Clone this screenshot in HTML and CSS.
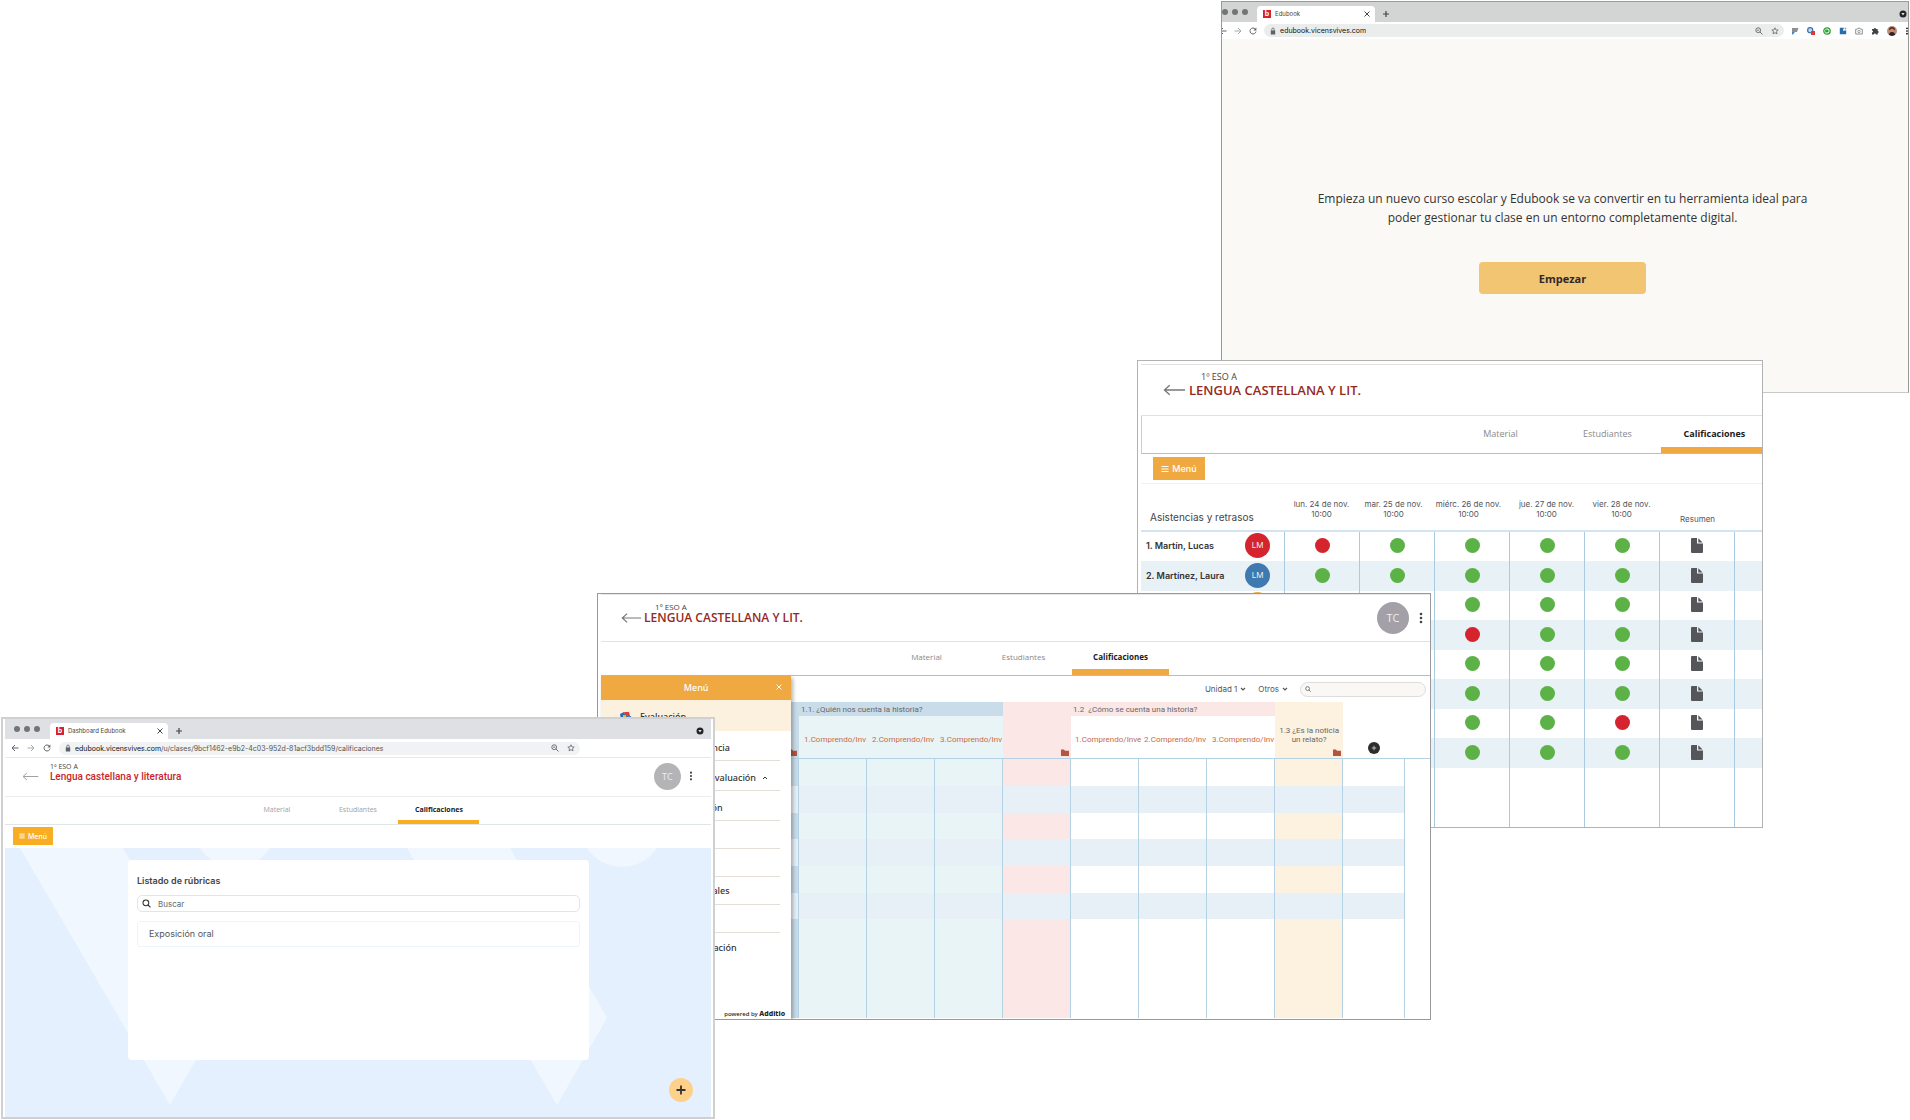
FILE: index.html
```html
<!DOCTYPE html>
<html lang="es">
<head>
<meta charset="utf-8">
<title>Edubook</title>
<link rel="stylesheet" href="styles.css">
</head>
<body>
<svg class="sprite" aria-hidden="true">
  <symbol id="i-back" viewBox="0 0 24 12"><path d="M7 1 1.500 6 7 11M1.500 6H23" fill="none" stroke="currentColor" stroke-width="1.400"/></symbol>
  <symbol id="i-left" viewBox="0 0 8 8"><path d="M4 1 1 4l3 3M1 4h6.500" fill="none" stroke="currentColor"/></symbol>
  <symbol id="i-right" viewBox="0 0 8 8"><path d="m4 1 3 3-3 3M7 4H.5" fill="none" stroke="currentColor"/></symbol>
  <symbol id="i-reload" viewBox="0 0 8 8"><path d="M6.300 2A3 3 0 1 0 7 4.600" fill="none" stroke="currentColor"/><path d="M7.400.5v3h-3z" fill="currentColor"/></symbol>
  <symbol id="i-lock" viewBox="0 0 8 8"><path d="M1.800 3.500h4.400v4H1.800z" fill="currentColor"/><path d="M2.800 4V2.200a1.200 1.200 0 0 1 2.400 0V4" fill="none" stroke="currentColor" stroke-width=".8"/></symbol>
  <symbol id="i-zoom" viewBox="0 0 8 8"><circle cx="3.200" cy="3.200" r="2.400" fill="none" stroke="currentColor" stroke-width=".9"/><path d="m5 5 2.500 2.500M2.200 3.200h2" stroke="currentColor" stroke-width=".9"/></symbol>
  <symbol id="i-search" viewBox="0 0 10 10"><circle cx="4.300" cy="4.300" r="3.200" fill="none" stroke="currentColor" stroke-width="1.200"/><path d="m6.600 6.600 2.800 2.800" stroke="currentColor" stroke-width="1.300"/></symbol>
  <symbol id="i-star" viewBox="0 0 8 8"><path d="m4 .8.95 2.100 2.250.2-1.700 1.500.5 2.200L4 5.700 2 6.800l.5-2.200L.8 3.100l2.250-.2z" fill="none" stroke="currentColor" stroke-width=".8"/></symbol>
  <symbol id="i-close" viewBox="0 0 8 8"><path d="m1.500 1.500 5 5m0-5-5 5" stroke="currentColor" stroke-width="1"/></symbol>
  <symbol id="i-plus" viewBox="0 0 8 8"><path d="M4 1v6M1 4h6" stroke="currentColor" stroke-width="1.200"/></symbol>
  <symbol id="i-bars" viewBox="0 0 8 8"><path d="M.5 1.500h7M.5 4h7M.5 6.500h7" stroke="currentColor" stroke-width="1.200"/></symbol>
  <symbol id="i-dots" viewBox="0 0 4 12"><circle cx="2" cy="2" r="1.300"/><circle cx="2" cy="6" r="1.300"/><circle cx="2" cy="10" r="1.300"/></symbol>
  <symbol id="i-chevron" viewBox="0 0 6 6"><path d="m1 2 2 2 2-2" fill="none" stroke="currentColor" stroke-width="1.200"/></symbol>
  <symbol id="i-up" viewBox="0 0 6 6"><path d="m1 4 2-2 2 2" fill="none" stroke="currentColor" stroke-width="1"/></symbol>
  <symbol id="i-more" viewBox="0 0 8 8"><circle cx="4" cy="4" r="3.500" fill="#222427"/><path d="M2.400 3h3.200L4 5.400z" fill="#e5e6e8"/></symbol>
  <symbol id="i-doc" viewBox="0 0 12 15"><path d="M1 0h5v5.500h6V14a1 1 0 0 1-1 1H1a1 1 0 0 1-1-1V1a1 1 0 0 1 1-1z" fill="#55565a"/><path d="M7.300.3 11.600 4.500H7.300z" fill="#55565a"/></symbol>
  <symbol id="i-folder" viewBox="0 0 8 7"><path d="M0 .5h3l1 1.200h4V7H0z" fill="#b5543f"/></symbol>
</svg>

<main class="stage">

  <section class="window welcome" aria-label="Edubook">
    <div class="tabbar">
      <div class="lights"><i></i><i></i><i></i></div>
      <div class="tab"><b class="favicon">b</b><span>Edubook</span><svg><use href="#i-close"/></svg></div>
      <svg class="newtab"><use href="#i-plus"/></svg>
      <svg class="more"><use href="#i-more"/></svg>
    </div>
    <div class="urlbar">
      <svg><use href="#i-left"/></svg><svg class="dim"><use href="#i-right"/></svg><svg><use href="#i-reload"/></svg>
      <div class="address"><svg><use href="#i-lock"/></svg><span class="url">edubook.vicensvives.com</span><svg><use href="#i-zoom"/></svg><svg><use href="#i-star"/></svg></div>
      <div class="extensions">
        <svg viewBox="0 0 8 8"><path d="M1 1h6.500L6 5H1z" fill="#8b9094"/><path d="M1 5h3L2 7.500H1z" fill="#4a86ba"/></svg>
        <svg viewBox="0 0 10 10"><circle cx="4" cy="4" r="3.200" fill="#c7d9ef" stroke="#3d6fae" stroke-width="1.500"/><path d="M5 5h5v5H5z" fill="#dd3b30"/></svg>
        <svg viewBox="0 0 8 8"><circle cx="4" cy="4" r="3.200" fill="#fff" stroke="#2ba12f" stroke-width="1.300"/><path d="M2.200 2.500h2.300L6 4 4.500 5.500H2.200z" fill="#2ba12f"/></svg>
        <svg viewBox="0 0 8 8"><path d="M.8.800h4L4 4l3.200-.8v4H.8z" fill="#2c6ca8"/><path d="M5 .8h2.200V3z" fill="#63a2d5"/></svg>
        <svg viewBox="0 0 8 8"><path d="M.7 2.200h1.600L3 1.200h2l.7 1h1.600V7H.7z" fill="none" stroke="#70757a" stroke-width=".8"/><circle cx="4" cy="4.500" r="1.200" fill="none" stroke="#70757a" stroke-width=".7"/></svg>
        <svg viewBox="0 0 8 8"><path d="M1 2h1.800a1.100 1.100 0 1 1 2.200 0h1.700v2a1 1 0 1 1 0 2v1.500H5a1.100 1.100 0 0 0-2.200 0H1V5.600a1 1 0 0 0 0-2z" fill="#3f4347"/></svg>
        <svg class="face" viewBox="0 0 10 10"><circle cx="5" cy="5" r="5" fill="#b98f7c"/><path d="M2 4a3 3 0 0 1 6 0z" fill="#4a2b22"/><circle cx="5" cy="4.500" r="1.900" fill="#d98867"/><path d="M2 9a3 3 0 0 1 6 0L5 10z" fill="#33222a"/></svg>
        <svg class="kebab"><use href="#i-dots"/></svg>
      </div>
    </div>
    <div class="intro">
      <p>Empieza un nuevo curso escolar y Edubook se va convertir en tu herramienta ideal para poder gestionar tu clase en un entorno completamente digital.</p>
      <button type="button">Empezar</button>
    </div>
  </section>

  <section class="window attendance" aria-label="Asistencias y retrasos">
    <header class="course">
      <a class="back" href="#" aria-label="Volver"><svg><use href="#i-back"/></svg></a>
      <div class="names"><small>1º ESO A</small><h2>LENGUA CASTELLANA Y LIT.</h2></div>
    </header>
    <nav class="tabs"><a href="#">Material</a><a href="#">Estudiantes</a><a href="#" class="active">Calificaciones</a></nav>
    <div class="tools"><button type="button" class="menu"><svg><use href="#i-bars"/></svg>Menú</button></div>
    <table class="register">
      <colgroup><col class="who"><col class="day"><col class="day"><col class="day"><col class="day"><col class="day"><col class="day"><col></colgroup>
      <thead><tr>
        <th class="title">Asistencias y retrasos</th>
        <th>lun. 24 de nov.<br>10:00</th><th class="early">mar. 25 de nov.<br>10:00</th><th class="early">miérc. 26 de nov.<br>10:00</th><th>jue. 27 de nov.<br>10:00</th><th>vier. 28 de nov.<br>10:00</th>
        <th class="summary">Resumen</th><th></th>
      </tr></thead>
      <tbody>
        <tr><td><div class="pupil"><span>1. Martín, Lucas</span><b class="red">LM</b></div></td><td><i class="no"></i></td><td><i></i></td><td><i></i></td><td><i></i></td><td><i></i></td><td><svg><use href="#i-doc"/></svg></td><td></td></tr>
        <tr><td><div class="pupil"><span>2. Martínez, Laura</span><b class="blue">LM</b></div></td><td><i></i></td><td><i></i></td><td><i></i></td><td><i></i></td><td><i></i></td><td><svg><use href="#i-doc"/></svg></td><td></td></tr>
        <tr><td><div class="pupil"><span></span><b class="amber"></b></div></td><td><i></i></td><td><i></i></td><td><i></i></td><td><i></i></td><td><i></i></td><td><svg><use href="#i-doc"/></svg></td><td></td></tr>
        <tr><td></td><td><i></i></td><td><i></i></td><td><i class="no"></i></td><td><i></i></td><td><i></i></td><td><svg><use href="#i-doc"/></svg></td><td></td></tr>
        <tr><td></td><td><i></i></td><td><i></i></td><td><i></i></td><td><i></i></td><td><i></i></td><td><svg><use href="#i-doc"/></svg></td><td></td></tr>
        <tr><td></td><td><i></i></td><td><i></i></td><td><i></i></td><td><i></i></td><td><i></i></td><td><svg><use href="#i-doc"/></svg></td><td></td></tr>
        <tr><td></td><td><i></i></td><td><i></i></td><td><i></i></td><td><i></i></td><td><i class="no"></i></td><td><svg><use href="#i-doc"/></svg></td><td></td></tr>
        <tr><td></td><td><i></i></td><td><i></i></td><td><i></i></td><td><i></i></td><td><i></i></td><td><svg><use href="#i-doc"/></svg></td><td></td></tr>
        <tr class="rest"><td></td><td></td><td></td><td></td><td></td><td></td><td></td><td></td></tr>
      </tbody>
    </table>
  </section>

  <section class="window gradebook" aria-label="Calificaciones">
    <header class="course">
      <a class="back" href="#" aria-label="Volver"><svg><use href="#i-back"/></svg></a>
      <div class="names"><small>1º ESO A</small><h2>LENGUA CASTELLANA Y LIT.</h2></div>
      <span class="avatar">TC</span>
      <button type="button" class="options" aria-label="Opciones"><svg><use href="#i-dots"/></svg></button>
    </header>
    <nav class="tabs"><a href="#">Material</a><a href="#">Estudiantes</a><a href="#" class="active">Calificaciones</a></nav>
    <div class="split">
      <aside class="sidebar">
        <div class="sidehead"><span>Menú</span><button type="button" aria-label="Cerrar"><svg><use href="#i-close"/></svg></button></div>
        <a href="#" class="current"><svg viewBox="0 0 12 12"><path d="M0 3 4 1l2 4-5 4z" fill="#2d6cb0"/><path d="M4 1h5l1 4-4 1z" fill="#d8412f"/><path d="M3 4h3v3H3z" fill="#e9b52c"/><path d="M6 5h5l1 4-5 2z" fill="#3b83c4"/><path d="M1 8h6v3H2z" fill="#45935a"/></svg>Evaluación</a>
        <ul>
          <li><a href="#">Control de asistencia</a></li>
          <li><a href="#">Instrumento de evaluación<svg><use href="#i-up"/></svg></a></li>
          <li><a href="#">Tabla de valoración</a></li>
          <li><a href="#">Rúbricas</a></li>
          <li><a href="#">Informes</a></li>
          <li><a href="#">Pruebas trimestrales</a></li>
          <li><a href="#">Ajustes</a></li>
          <li><a href="#">Informe de evaluación</a></li>
        </ul>
        <p class="powered">powered by <b>Additio</b></p>
      </aside>
      <div class="sheet">
        <div class="filters">
          <button type="button">Unidad 1<svg><use href="#i-chevron"/></svg></button>
          <button type="button">Otros<svg><use href="#i-chevron"/></svg></button>
          <label class="find"><svg><use href="#i-search"/></svg><input type="search" aria-label="Buscar"></label>
        </div>
        <table class="marks">
          <colgroup><col class="edge"><col class="unit"><col class="unit"><col class="unit"><col class="unit"><col class="unit"><col class="unit"><col class="unit"><col class="unit"><col class="add"><col></colgroup>
          <thead>
            <tr class="groups"><th rowspan="2" class="sky foldered"><svg><use href="#i-folder"/></svg></th><th colspan="3" class="sky">1.1. ¿Quién nos cuenta la historia?</th><th rowspan="2" class="pink foldered"><svg><use href="#i-folder"/></svg></th><th colspan="3" class="pink">1.2 &nbsp;¿Cómo se cuenta una historia?</th><th rowspan="2" class="cream foldered">1.3 ¿Es la noticia un relato?<svg><use href="#i-folder"/></svg></th><th rowspan="2" class="adder"><button type="button" aria-label="Añadir"><svg><use href="#i-plus"/></svg></button></th><th rowspan="2"></th></tr>
            <tr class="tasks"><th class="aqua">1.Comprendo/Inv</th><th class="aqua">2.Comprendo/Inv</th><th class="aqua">3.Comprendo/Inv</th><th>1.Comprendo/Inve</th><th>2.Comprendo/Inv</th><th>3.Comprendo/Inv</th></tr>
          </thead>
          <tbody>
            <tr><td class="sky"></td><td class="aqua"></td><td class="aqua"></td><td class="aqua"></td><td class="pink"></td><td></td><td></td><td></td><td class="cream"></td><td></td><td></td></tr>
            <tr class="band"><td></td><td></td><td></td><td></td><td></td><td></td><td></td><td></td><td></td><td></td><td></td></tr>
            <tr class="short"><td class="sky"></td><td class="aqua"></td><td class="aqua"></td><td class="aqua"></td><td class="pink"></td><td></td><td></td><td></td><td class="cream"></td><td></td><td></td></tr>
            <tr class="band"><td></td><td></td><td></td><td></td><td></td><td></td><td></td><td></td><td></td><td></td><td></td></tr>
            <tr><td class="sky"></td><td class="aqua"></td><td class="aqua"></td><td class="aqua"></td><td class="pink"></td><td></td><td></td><td></td><td class="cream"></td><td></td><td></td></tr>
            <tr class="band short"><td></td><td></td><td></td><td></td><td></td><td></td><td></td><td></td><td></td><td></td><td></td></tr>
            <tr class="rest"><td class="sky"></td><td class="aqua"></td><td class="aqua"></td><td class="aqua"></td><td class="pink"></td><td></td><td></td><td></td><td class="cream"></td><td></td><td></td></tr>
          </tbody>
        </table>
      </div>
    </div>
  </section>

  <section class="window dashboard" aria-label="Dashboard Edubook">
    <div class="tabbar">
      <div class="lights"><i></i><i></i><i></i></div>
      <div class="tab"><b class="favicon">b</b><span>Dashboard Edubook</span><svg><use href="#i-close"/></svg></div>
      <svg class="newtab"><use href="#i-plus"/></svg>
      <svg class="more"><use href="#i-more"/></svg>
    </div>
    <div class="urlbar">
      <svg><use href="#i-left"/></svg><svg class="dim"><use href="#i-right"/></svg><svg><use href="#i-reload"/></svg>
      <div class="address"><svg><use href="#i-lock"/></svg><span class="url">edubook.vicensvives.com<em>/u/clases/9bcf1462-e9b2-4c03-952d-81acf3bdd159/calificaciones</em></span><svg><use href="#i-zoom"/></svg><svg><use href="#i-star"/></svg></div>
    </div>
    <header class="course">
      <a class="back" href="#" aria-label="Volver"><svg><use href="#i-back"/></svg></a>
      <div class="names"><small>1º ESO A</small><h2>Lengua castellana y literatura</h2></div>
      <span class="avatar">TC</span>
      <button type="button" class="options" aria-label="Opciones"><svg><use href="#i-dots"/></svg></button>
    </header>
    <nav class="tabs"><a href="#">Material</a><a href="#">Estudiantes</a><a href="#" class="active">Calificaciones</a></nav>
    <div class="tools"><button type="button" class="menu"><svg><use href="#i-bars"/></svg>Menú</button></div>
    <div class="canvas">
      <svg class="decor" viewBox="0 0 707 269" aria-hidden="true"><g fill="#f0f7ff"><path d="M15 0h103l97 170-50 87z"/><path d="M402 0h103l97 170-50 87z"/><circle cx="230" cy="-23" r="42"/><circle cx="617" cy="-23" r="42"/></g></svg>
      <div class="card">
        <h3>Listado de rúbricas</h3>
        <label class="search"><svg><use href="#i-search"/></svg><input type="search" placeholder="Buscar" aria-label="Buscar"></label>
        <a href="#" class="rubric">Exposición oral</a>
      </div>
      <button type="button" class="fab" aria-label="Añadir"><svg><use href="#i-plus"/></svg></button>
    </div>
  </section>

</main>
</body>
</html>
```

FILE: styles.css
```css
* { box-sizing: border-box; }
body { margin: 0; background: #fff; color: #333; font-family: "Open Sans", "Noto Sans", sans-serif; }
a { color: inherit; text-decoration: none; }
button { margin: 0; padding: 0; border: 0; background: none; color: inherit; font: inherit; cursor: pointer; }
input { min-width: 0; padding: 0; border: 0; outline: 0; background: none; color: inherit; font: inherit; }
h2, h3, p, ul { margin: 0; padding: 0; }
ul { list-style: none; }
svg { display: block; flex: none; width: 8px; height: 8px; }
.sprite { position: absolute; width: 0; height: 0; }

/* Overlapping windows on a free canvas */
.stage { position: relative; min-height: 1120px; overflow: hidden; }
.window { position: absolute; isolation: isolate; overflow: hidden; background: #fff; border: 1px solid #999; }
.welcome { left: 63.93%; top: 1px; width: 36.02%; border-bottom-color: #c8c8c8; }
.attendance { left: 59.53%; top: 360px; width: 32.77%; padding: 3px 0 0 3px; border-color: #b0b2b3; }
.gradebook { left: 31.26%; top: 593px; width: 43.66%; padding-left: 3px; }
.dashboard { left: 0.05%; top: 717px; width: 37.38%; padding: 0 2px; border: 2px solid #d0d0d0; }

/* Browser chrome */
.tabbar { display: flex; align-items: flex-end; height: 20px; background: #dfe0e4; font: 6px/16px Inter, sans-serif; color: #444; }
.welcome .tabbar { background: #d2d5d4; }
.lights { display: flex; gap: 4px; width: 45px; height: 20px; padding-left: 9px; align-items: center; }
.welcome .lights { width: 35px; padding-left: 0; }
.lights i { width: 6px; height: 6px; border-radius: 50%; background: #737575; }
.tab { display: flex; align-items: center; gap: 4px; width: 118px; height: 16px; padding: 0 4px 0 6px; border-radius: 4px 4px 0 0; background: #fff; }
.tab span { flex: 1; }
.favicon { width: 8px; height: 8px; background: #d5222c; color: #fff; font: 700 7px/8px Inter, sans-serif; text-align: center; }
.newtab { margin: 0 0 4px 7px; }
.more { margin: 0 7px 4px auto; }
.welcome .more { margin-right: 1px; }
.urlbar { display: flex; align-items: center; gap: 8px; height: 19px; padding: 0 131px 0 6px; border-bottom: 1px solid #e8e8e8; color: #5f6368; font: 400 7px/13px Inter, sans-serif; }
.welcome .urlbar { height: 17px; padding: 0; border: 0; gap: 7px; }
.welcome .urlbar > svg:first-child { margin-left: -3px; }
.dim { color: #a5a8ab; }
.address { display: flex; flex: 1; align-items: center; gap: 8px; height: 13px; padding: 0 5px; border-radius: 7px; background: #f0f2f3; }
.welcome .address { background: #ebedec; }
.address .url { flex: 1; margin-left: -5px; color: #111; white-space: nowrap; }
.address em { font-style: normal; color: #555; }
.extensions { display: flex; align-items: center; gap: 8px; width: 117px; }
.extensions .face { width: 10px; height: 10px; }
.extensions .kebab { width: 4px; }

/* Welcome message */
.intro { padding: 150px 5px 98px 0; background: #faf9f5; text-align: center; }
.intro p { max-width: 500px; margin: 0 auto 35px; font-size: 12px; line-height: 19px; }
.intro button { width: 167px; height: 32px; border-radius: 4px; background: #f2c572; color: #33262b; font-size: 11px; font-weight: 700; }

/* Course heading */
.course { display: flex; align-items: center; border-bottom: 1px solid #e3e2de; }
.back { align-self: center; color: #77787a; }
.back svg { width: 23px; height: 12px; }
.names small { display: block; color: #444; }
.names h2 { color: #96291f; font-weight: 600; white-space: nowrap; }
.avatar { margin-left: auto; border-radius: 50%; background: #a3a0a7; color: #eee; text-align: center; }
.options svg { width: 4px; height: 12px; fill: #444; }

.attendance .course { height: 52px; padding-left: 22px; border-top: 1px solid #e3e2de; align-items: flex-start; }
.attendance .back { align-self: flex-start; margin-top: 19px; }
.attendance .names { padding: 6px 0 0 3px; }
.attendance small { padding-left: 12px; font-size: 9px; line-height: 12px; }
.attendance h2 { font-size: 13px; line-height: 14px; }

.gradebook .course { height: 48px; padding: 0 7px 0 20px; border-top: 1px solid #e8e8e8; }
.gradebook .back svg { width: 21px; }
.gradebook .names { padding: 0 0 10px 2px; }
.gradebook small { padding-left: 11px; font-size: 8px; line-height: 10px; }
.gradebook h2 { font-size: 12px; line-height: 12px; }
.gradebook .avatar { width: 32px; height: 32px; font-size: 11px; line-height: 32px; }
.gradebook .options { margin-left: 10px; }

.dashboard .course { height: 39px; padding: 0 18px 2px 17px; border-color: #ececec; }
.dashboard .back { color: #a0a0a2; }
.dashboard .back svg { width: 17px; height: 9px; }
.dashboard .names { padding: 0 0 8px 11px; }
.dashboard small { font-size: 7px; line-height: 9px; }
.dashboard h2 { color: #c9252b; font: 500 10px/11px Roboto, sans-serif; }
.dashboard .avatar { width: 27px; height: 27px; background: #b4b4b6; font-size: 9px; line-height: 27px; }
.dashboard .options { margin-left: 8px; }
.dashboard .options svg { height: 10px; }

/* Section tabs */
.tabs { display: flex; justify-content: center; border-bottom: 1px solid #bdbdb8; color: #88898b; text-align: center; }
.tabs a { border-bottom: 6px solid transparent; }
.tabs .active { border-color: #f0a840; color: #1b1b1b; font-weight: 700; }
.attendance .tabs { height: 38px; justify-content: flex-end; border-left: 1px solid #d0d0d0; font-size: 9px; line-height: 35px; }
.attendance .tabs a { width: 107px; height: 37px; }
.attendance .tabs a:last-child { margin-right: -6px; }
.gradebook .tabs { height: 34px; padding-left: 16px; font-size: 8px; line-height: 30px; }
.gradebook .tabs a { width: 97px; height: 33px; }
.dashboard .tabs { height: 28px; border-color: #dfe6e6; color: #a0a1a3; font-size: 7px; line-height: 25px; }
.dashboard .tabs a { width: 81px; height: 27px; border-bottom-width: 4px; }
.dashboard .tabs .active { border-color: #f9ad22; color: #1b1b1b; }

.tools { display: flex; }
.menu { display: flex; align-items: center; justify-content: center; gap: 3px; color: #fff; background: #f0a840; font-family: Inter, sans-serif; font-weight: 500; }
.attendance .tools { height: 30px; padding: 3px 0 0 12px; border-bottom: 1px solid #f1f0ec; }
.attendance .menu { width: 52px; height: 23px; font-size: 9px; }
.dashboard .tools { height: 23px; padding: 2px 0 0 8px; }
.dashboard .menu { width: 40px; height: 18px; background: #f9ad22; font-size: 7px; }
.dashboard .menu svg { width: 6px; height: 6px; }

/* Attendance register */
table { width: 100%; border-collapse: separate; border-spacing: 0; table-layout: fixed; font-family: Inter, sans-serif; }
th, td { padding: 0; font-weight: 400; }
.who { width: 144px; }
.day { width: 75px; }
.register th { height: 48px; padding: 0 2px 11px 0; border-bottom: 2px solid #d3e3ef; font-size: 8px; line-height: 10px; color: #55565a; vertical-align: bottom; white-space: nowrap; }
.register .title { padding: 0 0 6px 9px; font-size: 10px; line-height: 14px; color: #444; text-align: left; }
.register .early { padding-right: 8px; }
.register .summary { padding: 0 0 6px; }
.register td { height: 29px; padding-bottom: 2px; border-right: 1px solid #a9cae0; }
.register tr:nth-child(even) td { height: 30px; background: #e8f1f6; }
.register td:last-child { border: 0; }
.register td > i { display: block; width: 15px; height: 15px; margin: 0 auto; border-radius: 50%; background: #5cb247; }
.register td > .no { background: #d5242e; }
.register td > svg { width: 12px; height: 15px; margin: 0 auto; }
.register .rest td { height: 59px; }
.pupil { display: flex; align-items: center; justify-content: space-between; padding: 0 14px 0 5px; color: #333; font-size: 9px; font-weight: 600; }
.pupil b { width: 25px; height: 25px; border-radius: 50%; color: #eee; font-size: 8px; font-weight: 400; line-height: 25px; text-align: center; }
.red { background: #d5242e; }
.blue { background: #3e79b0; }
.amber { background: #f0a840; }

/* Gradebook */
.split { display: flex; }
.sidebar { position: relative; z-index: 1; flex: none; width: 190px; background: #fff; color: #333; font-family: "Noto Sans", sans-serif; font-size: 9px; font-weight: 500; box-shadow: 2px 2px 4px rgba(0, 0, 0, .3); }
.sidehead { display: flex; align-items: center; height: 24px; padding: 0 8px 2px 16px; background: #f0a840; color: #fff; text-align: center; }
.sidehead span { flex: 1; }
.current { display: flex; align-items: center; gap: 8px; height: 31px; padding: 2px 0 0 19px; background: #fcf1de; }
.current svg { width: 12px; height: 12px; }
.sidebar li { display: flex; align-items: center; height: 28px; margin-right: 11px; padding-left: 39px; border-bottom: 1px solid #e3dfd8; }
.sidebar li:nth-child(-n+3) { height: 30px; padding-top: 4px; }
.sidebar li:last-child { border: 0; }
.sidebar li a { display: flex; align-items: center; gap: 6px; }
.sidebar li svg { width: 6px; height: 6px; }
.powered { padding: 48px 6px 0 0; color: #222; font-size: 6px; font-weight: 500; line-height: 9px; text-align: right; }
.powered b { font-size: 7px; font-weight: 800; }
.sheet { flex: 1; min-width: 0; }
.filters { display: flex; align-items: center; justify-content: flex-end; gap: 12px; height: 26px; padding-right: 4px; color: #55565a; font: 8px/12px Inter, sans-serif; }
.filters button { display: flex; align-items: center; gap: 3px; }
.filters svg { width: 6px; height: 6px; }
.find { display: flex; align-items: center; width: 126px; height: 15px; padding: 0 4px; border: 1px solid #dedddb; border-radius: 8px; background: #faf8f5; }
.find input { flex: 1; }

.edge { width: 8px; }
.unit { width: 68px; }
.add { width: 62px; }
.marks th { color: #66676b; font: 8px/9px Roboto, sans-serif; border-bottom: 1px solid #b5d2e5; }
.marks .groups th[colspan] { height: 14px; padding-left: 2px; border: 0; text-align: left; }
.marks .tasks th { height: 43px; color: #c96a48; white-space: nowrap; padding: 4px 0 0 4px; }
.marks .foldered { position: relative; padding-top: 10px; }
.foldered svg { position: absolute; right: 2px; bottom: 2px; height: 7px; }
.marks .adder { padding-top: 35px; }
.adder button { display: grid; place-items: center; width: 12px; height: 12px; margin: 0 auto; border-radius: 50%; background: #2d2e30; color: #ccc; }
.adder svg { width: 6px; height: 6px; }
.marks td { height: 27px; border-right: 1px solid #b5d2e5; }
.marks .short td { height: 26px; }
.marks .rest td { height: 99px; }
.marks td:last-child { border: 0; }
.marks .band td:not(:last-child) { background: #e7f0f6; }
.sky { background: #c9dcea; }
.aqua { background: #e9f4f7; }
.pink { background: #fbe7e5; }
.cream { background: #fcf2df; }

/* Rubric list */
.canvas { position: relative; padding: 12px 122px 57px 123px; background: #e4f0fe; }
.decor { position: absolute; left: 0; top: 0; width: 707px; height: 269px; }
.card { position: relative; min-height: 200px; padding: 15px 9px 0; border-radius: 4px; background: #fff; color: #55565a; font: 8px/12px Inter, sans-serif; }
.card h3 { color: #444; font-size: 9px; font-weight: 600; line-height: 12px; }
.search { display: flex; align-items: center; gap: 7px; height: 17px; margin-top: 8px; padding: 0 4px; border: 1px solid #e4e4e6; border-radius: 5px; color: #333; }
.search svg { width: 9px; height: 9px; }
.search input { flex: 1; }
.search input::placeholder { color: #66676b; opacity: 1; }
.rubric { display: block; margin-top: 9px; padding: 6px 11px; border: 1px solid #eff4fa; border-radius: 3px; font-size: 9px; }
.fab { position: absolute; right: 18px; bottom: 15px; display: grid; place-items: center; width: 24px; height: 24px; border-radius: 50%; background: #fdd18a; color: #333; }
.fab svg { width: 12px; height: 12px; }
```
